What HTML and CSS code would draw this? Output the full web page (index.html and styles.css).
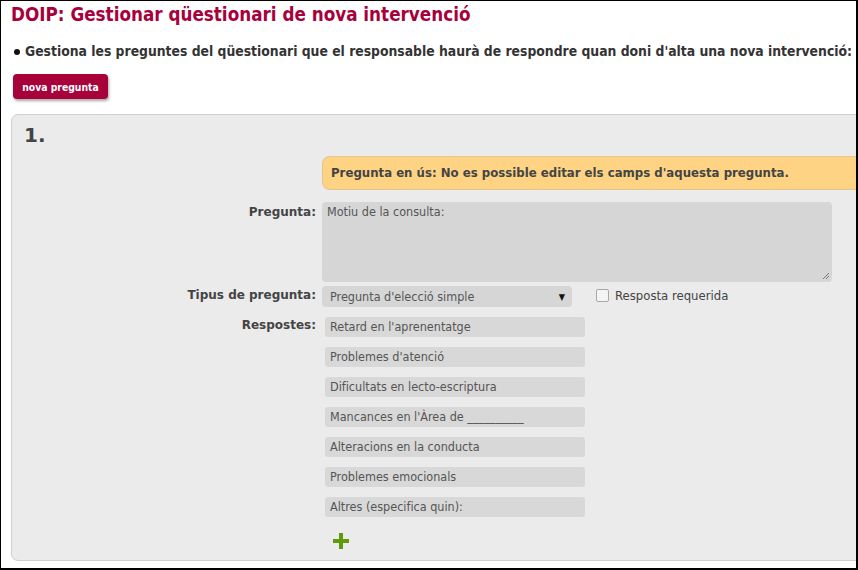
FILE: index.html
```html
<!DOCTYPE html>
<html lang="ca">
<head>
<meta charset="utf-8">
<title>DOIP</title>
<link rel="stylesheet" href="styles.css">
</head>
<body>
<div class="frame">
  <h1 class="title">DOIP: Gestionar qüestionari de nova intervenció</h1>
  <ul class="intro">
    <li>Gestiona les preguntes del qüestionari que el responsable haurà de respondre quan doni d'alta una nova intervenció:</li>
  </ul>
  <div class="actions"><button class="btn">nova pregunta</button></div>
  <div class="panel">
    <div class="num">1.</div>
    <div class="form">
      <div class="r1"></div>
      <div class="warn r1">Pregunta en ús: No es possible editar els camps d'aquesta pregunta.</div>

      <div class="label r2">Pregunta:</div>
      <div class="field r2"><div class="textarea">Motiu de la consulta:<svg class="grip" width="8" height="8" viewBox="0 0 8 8"><path d="M7 1 L1 7 M7 4 L4 7" stroke="#777" stroke-width="1"/></svg></div></div>

      <div class="label r3">Tipus de pregunta:</div>
      <div class="field row r3">
        <div class="select"><span>Pregunta d'elecció simple</span><span class="arrow">▼</span></div>
        <label class="check"><span class="box"></span>Resposta requerida</label>
      </div>

      <div class="label r4">Respostes:</div>
      <div class="field answers r4">
        <div class="input">Retard en l'aprenentatge</div>
        <div class="input">Problemes d'atenció</div>
        <div class="input">Dificultats en lecto-escriptura</div>
        <div class="input">Mancances en l'Àrea de __________</div>
        <div class="input">Alteracions en la conducta</div>
        <div class="input">Problemes emocionals</div>
        <div class="input">Altres (especifica quin):</div>
        <div class="plus"><svg width="16" height="16" viewBox="0 0 16 16"><path d="M6 0h4v6h6v4h-6v6h-4v-6h-6v-4h6z" fill="#5f9a0c"/></svg></div>
      </div>
    </div>
  </div>
</div>
</body>
</html>
```
FILE: styles.css
```css
html, body {
  margin: 0;
  padding: 0;
  background: #fff;
}
.frame {
  box-sizing: border-box;
  width: 858px;
  height: 570px;
  border-style: solid;
  border-color: #000;
  border-width: 1px 2px 2px 1px;
  overflow: hidden;
  padding: 0 0 0 10px;
  font-family: "DejaVu Sans Condensed", "DejaVu Sans", sans-serif;
  color: #444;
}
.title {
  margin: 2px 0 0 0;
  font-size: 18.7px;
  line-height: 24px;
  font-weight: bold;
  color: #a8003b;
}
.intro {
  margin: 15px 0 0 0;
  padding: 0 0 0 14px;
  font-size: 13.8px;
  line-height: 18px;
  font-weight: bold;
  color: #333;
  white-space: nowrap;
  list-style: none;
  position: relative;
}
.intro li::before {
  content: "";
  position: absolute;
  left: 3px;
  top: 7px;
  width: 6px;
  height: 6px;
  border-radius: 50%;
  background: #111;
}
.actions {
  margin-top: 14px;
  padding-left: 2px;
}
.btn {
  display: block;
  width: 95px;
  height: 25px;
  border: 0;
  border-radius: 4px;
  background: #a8003b;
  color: #fff;
  font-family: "DejaVu Sans Condensed", "DejaVu Sans", sans-serif;
  font-weight: bold;
  font-size: 10.3px;
  padding: 0;
  box-shadow: 1px 2px 3px rgba(0,0,0,0.35);
}
.panel {
  margin-top: 15px;
  width: 900px;
  height: 447px;
  box-sizing: border-box;
  background: #ebebeb;
  border: 1px solid #cfcfcf;
  border-radius: 7px;
  padding: 8px 0 0 12px;
}
.num {
  font-family: "DejaVu Sans", sans-serif;
  font-weight: bold;
  font-size: 20px;
  line-height: 24px;
  color: #444;
}
.form {
  margin-top: 9px;
  display: grid;
  grid-template-columns: 292px 1fr;
  column-gap: 6px;
  row-gap: 0;
  align-items: start;
}
.r2 { margin-top: 12px; }
.r3 { margin-top: 4px; }
.r4 { margin-top: 10px; }
.warn {
  box-sizing: border-box;
  height: 34px;
  background: #fed484;
  border: 1px solid #e2c58e;
  border-right: 0;
  border-radius: 8px 0 0 8px;
  padding: 0 0 0 8px;
  font-family: "DejaVu Sans", sans-serif;
  font-weight: bold;
  font-size: 11.75px;
  line-height: 32px;
  color: #444;
}
.label {
  text-align: right;
  font-family: "DejaVu Sans", sans-serif;
  font-weight: bold;
  font-size: 12px;
  line-height: 16px;
  padding-top: 2px;
  color: #444;
}
.label.r3 { padding-top: 1px; }
.label.r4 { padding-top: 0; }
.textarea {
  position: relative;
  box-sizing: border-box;
  width: 510px;
  height: 80px;
  background: #d6d6d6;
  border-radius: 4px;
  padding: 2px 5px;
  font-size: 12.5px;
  line-height: 15px;
  color: #555;
}
.grip {
  position: absolute;
  right: 2px;
  bottom: 2px;
}
.row {
  display: flex;
  align-items: center;
}
.select {
  box-sizing: border-box;
  width: 250px;
  height: 21px;
  background: #d6d6d6;
  border-radius: 4px;
  display: flex;
  justify-content: space-between;
  align-items: center;
  padding: 0 7px 0 8px;
  font-size: 12.5px;
  color: #555;
}
.arrow {
  font-size: 9px;
  color: #111;
}
.check {
  display: flex;
  align-items: center;
  margin-left: 24px;
  margin-top: -3px;
  font-size: 13px;
  color: #444;
}
.box {
  box-sizing: border-box;
  width: 13px;
  height: 13px;
  border: 1px solid #a8a8a8;
  border-radius: 2px;
  background: #f4f4f4;
  margin-right: 6px;
}
.answers {
  display: flex;
  flex-direction: column;
  gap: 10px;
  padding-left: 3px;
}
.input {
  box-sizing: border-box;
  width: 260px;
  height: 20px;
  background: #d8d8d8;
  border-radius: 3px;
  padding: 0 5px;
  font-size: 12.5px;
  line-height: 20px;
  color: #555;
}
.plus {
  margin: 6px 0 0 8px;
  height: 16px;
}
.plus svg {
  display: block;
}
```
